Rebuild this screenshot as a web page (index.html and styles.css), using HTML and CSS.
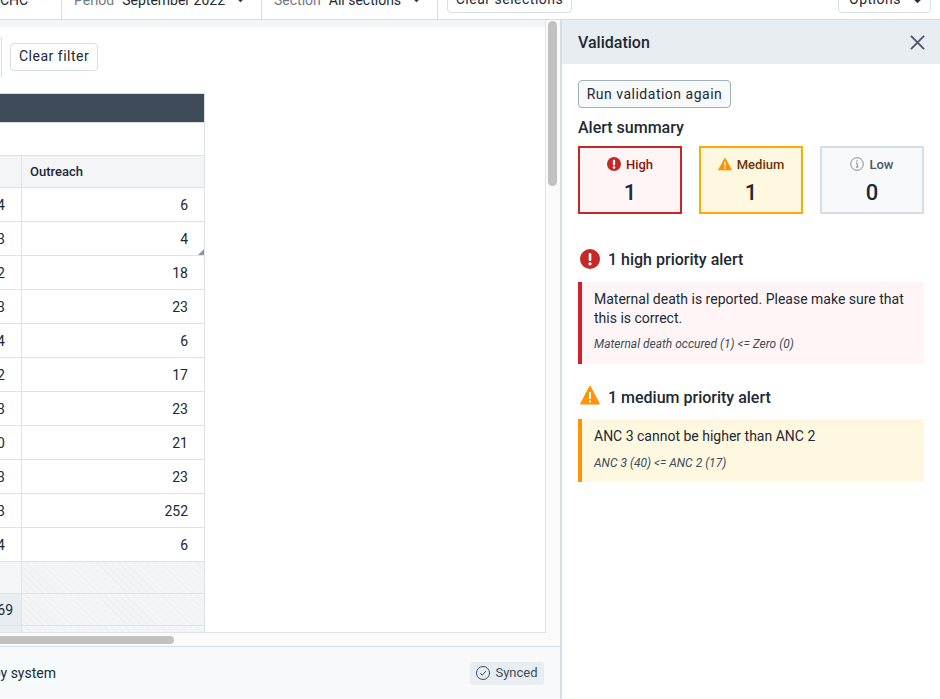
FILE: index.html
```html
<!DOCTYPE html>
<html lang="en">
<head>
    <meta charset="UTF-8">
    <meta name="viewport" content="width=device-width, initial-scale=1.0">
    <title>Data entry validation</title>
    <link rel="stylesheet" href="styles.css">
</head>
<body>
    <header class="topbar">
        <div class="selector selector-first">
            <span class="selector-value">CHC</span>
            <svg class="caret" viewBox="0 0 10 6"><path d="M1 1h8L5 5z" fill="#212934" stroke="#212934" stroke-linejoin="round"/></svg>
        </div>
        <div class="selector selector-period">
            <span class="selector-label">Period</span>
            <span class="selector-value">September 2022</span>
            <svg class="caret" viewBox="0 0 10 6"><path d="M1 1h8L5 5z" fill="#212934" stroke="#212934" stroke-linejoin="round"/></svg>
        </div>
        <div class="selector selector-section">
            <span class="selector-label">Section</span>
            <span class="selector-value">All sections</span>
            <svg class="caret" viewBox="0 0 10 6"><path d="M1 1h8L5 5z" fill="#212934" stroke="#212934" stroke-linejoin="round"/></svg>
        </div>
        <button class="btn btn-top btn-clear">Clear selections</button>
        <button class="btn btn-top btn-options">
            Options
            <svg class="caret" viewBox="0 0 10 6"><path d="M1 1h8L5 5z" fill="#212934" stroke="#212934" stroke-linejoin="round"/></svg>
        </button>
    </header>

    <div class="layout">
        <main class="workspace">
            <div class="workspace-top">
                <div class="sheet">
                    <div class="strip"></div>
                    <div class="sheet-body">
                        <div class="filters">
                            <div class="filter-input"></div>
                            <button class="btn">Clear filter</button>
                        </div>
                        <table class="grid">
                            <colgroup>
                                <col class="col-first">
                                <col class="col-outreach">
                            </colgroup>
                            <tr class="row-title"><td colspan="2"></td></tr>
                            <tr class="row-blank"><td colspan="2"></td></tr>
                            <tr class="row-head"><th></th><th>Outreach</th></tr>
                            <tr><td>14</td><td>6</td></tr>
                            <tr><td>13</td><td class="has-comment">4<span class="comment-mark"></span></td></tr>
                            <tr><td>12</td><td>18</td></tr>
                            <tr><td>13</td><td>23</td></tr>
                            <tr><td>14</td><td>6</td></tr>
                            <tr><td>12</td><td>17</td></tr>
                            <tr><td>13</td><td>23</td></tr>
                            <tr><td>10</td><td>21</td></tr>
                            <tr><td>13</td><td>23</td></tr>
                            <tr><td>13</td><td>252</td></tr>
                            <tr><td>14</td><td>6</td></tr>
                            <tr class="row-shaded"><td></td><td class="hatched"></td></tr>
                            <tr class="row-shaded"><td class="total">269</td><td class="hatched"></td></tr>
                            <tr class="row-shaded"><td class="total"></td><td class="hatched"></td></tr>
                        </table>
                    </div>
                </div>
                <div class="vscroll"><div class="vscroll-thumb"></div></div>
            </div>
            <div class="hscroll"><div class="hscroll-thumb"></div></div>
            <footer class="statusbar">
                <span class="status-note">Stored by system</span>
                <span class="synced">
                    <svg viewBox="0 0 14 14" width="14" height="14" fill="none" stroke="#404b5a"><circle cx="7" cy="7" r="6.500"/><path d="M4.200 7.200l2 2 3.600-4"/></svg>
                    Synced
                </span>
            </footer>
        </main>

        <aside class="panel">
            <div class="panel-head">
                <h2>Validation</h2>
                <svg class="close" viewBox="0 0 16 16" fill="none" stroke="#4a5768" stroke-width="2"><path d="M1 1l14 14M15 1L1 15"/></svg>
            </div>
            <div class="panel-body">
                <button class="btn btn-run">Run validation again</button>
                <h3 class="summary-title">Alert summary</h3>
                <div class="cards">
                    <div class="card card-high">
                        <div class="card-label">
                            <svg class="icon-sm" viewBox="0 0 20 20"><circle cx="10" cy="10" r="10" fill="#c62828"/><rect x="8.400" y="4" width="3.200" height="8" rx="1.200" fill="#fff"/><circle cx="10" cy="14.900" r="1.800" fill="#fff"/></svg>
                            High
                        </div>
                        <div class="card-count">1</div>
                    </div>
                    <div class="card card-medium">
                        <div class="card-label">
                            <svg class="icon-sm" viewBox="0 0 20 20"><path d="M10 1.500L19.500 18.500H.5z" fill="#ff9302" stroke="#ff9302" stroke-linejoin="round"/><rect x="9" y="7" width="2" height="6.500" fill="#fff"/><rect x="9" y="14.700" width="2" height="2" fill="#fff"/></svg>
                            Medium
                        </div>
                        <div class="card-count">1</div>
                    </div>
                    <div class="card card-low">
                        <div class="card-label">
                            <svg class="icon-sm" viewBox="0 0 20 20" fill="none" stroke="#6e7a8a"><circle cx="10" cy="10" r="9" stroke-width="1.200"/><path d="M8.600 8.800H10.300V14.500M8.400 14.500H12" stroke-width="1.200"/><circle cx="10" cy="5.800" r="1" fill="#6e7a8a" stroke="none"/></svg>
                            Low
                        </div>
                        <div class="card-count">0</div>
                    </div>
                </div>

                <div class="alert-group alert-group-high">
                    <div class="alert-title">
                        <svg class="icon-lg" viewBox="0 0 20 20"><circle cx="10" cy="10" r="10" fill="#c62828"/><rect x="8.700" y="4" width="2.600" height="8" rx="1" fill="#fff"/><circle cx="10" cy="14.800" r="1.600" fill="#fff"/></svg>
                        <span>1 high priority alert</span>
                    </div>
                    <div class="alert alert-high">
                        <p>Maternal death is reported. Please make sure that this is correct.</p>
                        <p class="alert-rule">Maternal death occured (1) &lt;= Zero (0)</p>
                    </div>
                </div>

                <div class="alert-group alert-group-medium">
                    <div class="alert-title">
                        <svg class="icon-lg icon-raised" viewBox="0 0 20 20"><path d="M10 1L19.500 19H.5z" fill="#ff9302" stroke="#ff9302" stroke-linejoin="round"/><rect x="9" y="7" width="2" height="7" fill="#fff"/><rect x="9" y="15.500" width="2" height="2" fill="#fff"/></svg>
                        <span>1 medium priority alert</span>
                    </div>
                    <div class="alert alert-medium">
                        <p>ANC 3 cannot be higher than ANC 2</p>
                        <p class="alert-rule">ANC 3 (40) &lt;= ANC 2 (17)</p>
                    </div>
                </div>
            </div>
        </aside>
    </div>
</body>
</html>
```

FILE: styles.css
```css
* {
    box-sizing: border-box;
}
html, body {
    height: 100%;
}
body {
    margin: 0;
    overflow: hidden;
    display: flex;
    flex-direction: column;
    font-family: Roboto, "Liberation Sans", sans-serif;
    font-size: 14px;
    color: #212934;
    background-color: #fff;
}
p, h2, h3 {
    margin: 0;
}

/* Top bar, scrolled so that only its lower half shows */
.topbar {
    flex: none;
    height: 20px;
    display: flex;
    align-items: flex-end;
    overflow: hidden;
    border-bottom: 1px solid #d5dde5;
    background-color: #fff;
}
.selector {
    flex: none;
    height: 40px;
    margin-bottom: -1px;
    display: flex;
    align-items: center;
    gap: 8px;
    border-right: 1px solid #d5dde5;
}
.selector-first {
    width: 62px;
    justify-content: flex-end;
    padding-right: 15px;
    gap: 14px;
}
.selector-period {
    width: 200px;
    padding-left: 12px;
}
.selector-section {
    width: 176px;
    padding-left: 12px;
}
.selector-label {
    color: #6e7a8a;
}
.caret {
    width: 9px;
    height: 6px;
    margin-left: 3px;
}
.btn {
    flex: none;
    height: 28px;
    padding: 0 8px;
    font-family: inherit;
    font-size: 14px;
    letter-spacing: 0.5px;
    white-space: nowrap;
    color: #212934;
    background-color: #fff;
    border: 1px solid #d5dde5;
    border-radius: 4px;
}
.btn-top {
    margin-bottom: 6px;
}
.btn-clear {
    margin-left: 9px;
    width: 125px;
    padding: 0;
}
.btn-options {
    margin-left: auto;
    margin-right: 9px;
    width: 93px;
    padding: 0 0 0 2px;
}
.btn-options .caret {
    margin-left: 8px;
}

.layout {
    flex: 1;
    min-height: 0;
    display: flex;
}

/* Left side: data entry form */
.workspace {
    flex: none;
    width: 560px;
    display: flex;
    flex-direction: column;
    background-color: #f8f9fa;
}
.workspace-top {
    flex: none;
    height: 613px;
    display: flex;
}
.sheet {
    flex: none;
    width: 546px;
    display: flex;
    flex-direction: column;
    overflow: hidden;
    border-right: 1px solid #e0e4e8;
    border-bottom: 1px solid #e0e4e8;
}
.strip {
    flex: none;
    height: 7px;
    background-color: #f3f5f7;
}
.sheet-body {
    flex: 1;
    min-height: 0;
    overflow: hidden;
    background-color: #fff;
}
.filters {
    height: 40px;
    margin: 10px 0 16px;
    display: flex;
    align-items: center;
    gap: 8px;
}
.filter-input {
    flex: none;
    width: 2px;
    height: 40px;
    border: 1px solid #d5dde5;
    border-left: 0;
    border-radius: 0 4px 4px 0;
}
.filters .btn {
    padding-bottom: 2px;
}
.grid {
    width: 285px;
    margin-left: -80px;
    table-layout: fixed;
    border-collapse: collapse;
}
.col-first {
    width: 101px;
}
.grid td, .grid th {
    height: 34px;
    padding: 0 16px 0 8px;
    border: 1px solid #dde3e9;
    text-align: right;
    font-size: 14px;
    font-weight: 400;
}
.grid .row-title td {
    height: 29px;
    background-color: #404b5a;
    border-color: #d5dde5;
}
.grid .row-blank td {
    height: 33px;
}
.grid .row-head th {
    height: 32px;
    text-align: left;
    font-size: 13px;
    font-weight: 500;
    background-color: #f3f5f7;
}
.grid .row-shaded td {
    height: 32px;
    background-color: #f3f5f7;
}
.grid .row-shaded td.total {
    padding-right: 8px;
    background-color: #e8edf2;
}
.grid .row-shaded td.hatched {
    background-image: repeating-linear-gradient(45deg, #f3f5f7 0, #f3f5f7 4px, #eceff3 4px, #eceff3 5px);
}
.has-comment {
    position: relative;
}
.comment-mark {
    position: absolute;
    right: 0;
    bottom: 0;
    border-style: solid;
    border-width: 0 0 6px 6px;
    border-color: transparent transparent #8a97a6 transparent;
}

/* Scrollbars */
.vscroll {
    flex: none;
    width: 14px;
    padding: 1px 0 0 2px;
    background-color: #fafafa;
}
.vscroll-thumb {
    width: 9px;
    height: 165px;
    border-radius: 5px;
    background-color: #c1c1c1;
}
.hscroll {
    flex: none;
    height: 14px;
    padding-top: 3px;
    background-color: #fafafa;
    border-bottom: 1px solid #d5dde5;
}
.hscroll-thumb {
    width: 174px;
    height: 8px;
    border-radius: 0 4px 4px 0;
    background-color: #c1c1c1;
}

/* Footer status */
.statusbar {
    flex: 1;
    display: flex;
    justify-content: space-between;
    align-items: center;
    padding: 0 16px 0 0;
}
.status-note {
    flex: none;
    height: 23px;
    width: 119px;
    margin-left: -60px;
    line-height: 23px;
    text-align: right;
    white-space: nowrap;
    padding-right: 3px;
    background-color: #f5fbff;
}
.synced {
    flex: none;
    width: 74px;
    height: 23px;
    padding-bottom: 1px;
    display: flex;
    align-items: center;
    justify-content: center;
    gap: 5px;
    font-size: 13px;
    color: #404b5a;
    background-color: #e8edf2;
    border-radius: 3px;
}

/* Right side: validation panel */
.panel {
    flex: 1;
    min-width: 0;
    border-left: 2px solid #d5dde5;
    background-color: #fff;
}
.panel-head {
    height: 44px;
    display: flex;
    align-items: center;
    justify-content: space-between;
    padding: 0 15px 0 16px;
    background-color: #e8edf2;
}
.panel-head h2 {
    font-size: 16px;
    font-weight: 500;
}
.close {
    width: 15px;
    height: 15px;
}
.panel-body {
    padding: 16px;
}
.btn-run {
    display: block;
    width: 153px;
    padding: 0;
    background-color: #f8f9fa;
    border-color: #a0adba;
}
.summary-title {
    margin-top: 10px;
    font-size: 16px;
    line-height: 19px;
    font-weight: 500;
}
.cards {
    margin-top: 9px;
    display: flex;
    gap: 17px;
}
.card {
    flex: 1;
    height: 68px;
    padding-top: 7px;
    text-align: center;
    border: 2px solid #d5dde5;
    background-color: #f8f9fa;
}
.card-label {
    height: 18px;
    display: flex;
    align-items: center;
    justify-content: center;
    gap: 5px;
    font-size: 13px;
    font-weight: 500;
    color: #4a5768;
}
.card-count {
    margin-top: 7px;
    font-size: 22px;
    line-height: 26px;
    font-weight: 500;
}
.card-high {
    border-color: #c62828;
    background-color: #fff5f6;
}
.card-high .card-label {
    color: #891515;
}
.card-medium {
    border-color: #ffa902;
    background-color: #fff8e1;
}
.card-medium .card-label {
    color: #6f3205;
}
.icon-sm {
    width: 14px;
    height: 14px;
}
.icon-lg {
    width: 20px;
    height: 20px;
}
.icon-raised {
    margin-top: -4px;
}
.alert-group-high {
    margin-top: 35px;
}
.alert-group-medium {
    margin-top: 23px;
}
.alert-title {
    display: flex;
    align-items: center;
    gap: 8px;
    height: 20px;
    padding-left: 2px;
    font-size: 16px;
    font-weight: 500;
}
.alert {
    margin-top: 13px;
    padding: 8px 12px 0;
    border-left: 4px solid #d32029;
    line-height: 19px;
}
.alert-high {
    height: 82px;
    background-color: #fff5f6;
}
.alert-medium {
    height: 63px;
    margin-top: 12px;
    border-left-color: #ff9302;
    background-color: #fff8e1;
}
.alert-rule {
    margin-top: 7px;
    font-size: 12px;
    font-style: italic;
    color: #404b5a;
}
.alert-medium .alert-rule {
    margin-top: 8px;
}
```
